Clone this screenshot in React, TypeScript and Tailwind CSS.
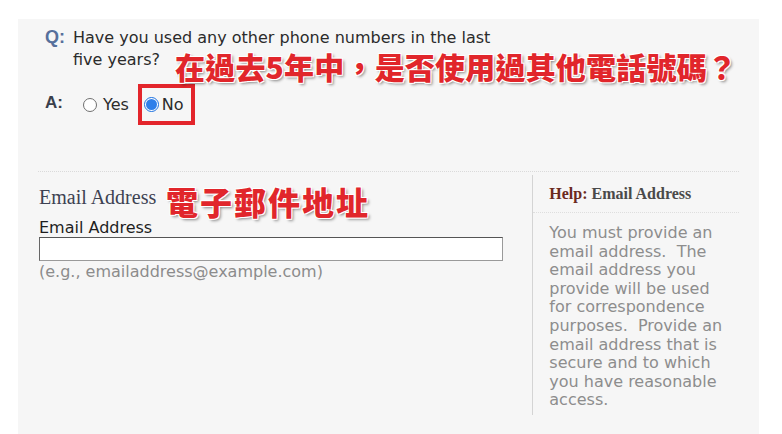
import React from 'react';

const helpLines = [
  'You must provide an',
  'email address.  The',
  'email address you',
  'provide will be used',
  'for correspondence',
  'purposes.  Provide an',
  'email address that is',
  'secure and to which',
  'you have reasonable',
  'access.',
];

const noteStyle =
  "font-['Noto_Sans_CJK_TC',sans-serif] font-black text-[#e1262b] whitespace-nowrap [text-shadow:-1px_-1px_0_#fff,1px_-1px_0_#fff,-1px_1px_0_#fff,1px_1px_0_#fff,2px_2px_3px_rgba(0,0,0,0.45)]";

function Radio({ checked }: { checked?: boolean }) {
  return checked ? (
    <span className="w-[15px] h-[15px] rounded-full border border-[#1a6fe0] bg-white flex items-center justify-center">
      <span className="w-[11px] h-[11px] rounded-full bg-[#2f7fea]" />
    </span>
  ) : (
    <span className="w-[14px] h-[14px] rounded-full border border-[#6f6f6f] bg-white" />
  );
}

export default function App() {
  return (
    <div className="w-[782px] h-[434px] bg-white pt-[19px] pl-[18px] overflow-hidden font-['DejaVu_Sans',sans-serif]">
      <div className="relative w-[741px] h-[415px] bg-[#f6f6f6] px-[20px]">
        {/* Question */}
        <div className="h-[152px] pt-[5px] pl-[7px]">
          <div className="flex items-baseline">
            <span className="w-[28px] text-[18px] font-bold text-[#56709c] font-['Liberation_Sans',sans-serif]">Q:</span>
            <p className="text-[16px] leading-[22px] text-[#2b2b2b]">
              Have you used any other phone numbers in the last
              <br />
              five years?
            </p>
          </div>
          <div className="flex items-center mt-[13px]">
            <span className="w-[38px] text-[17px] font-bold text-[#3a3f4c] font-['Liberation_Sans',sans-serif] -mt-[4px]">A:</span>
            <label className="flex items-center gap-[6px] text-[16px] text-[#2b2b2b]">
              <Radio />
              Yes
            </label>
            <div className="ml-[9px] h-[41px] border-4 border-[#e3252b] flex items-center gap-[3px] pl-[2px] pr-[7px]">
              <Radio checked />
              <span className="text-[16px] text-[#2b2b2b]">No</span>
            </div>
          </div>
        </div>

        {/* Email section */}
        <div className="border-t border-dotted border-[#dadada]">
          <div className="flex pt-[3px]">
            <div className="w-[495px] pl-[1px] pt-[11px]">
              <h3 className="text-[20px] leading-[22px] text-[#3d4252] font-['Liberation_Serif',serif]">Email Address</h3>
              <label className="block mt-[10px] text-[16px] leading-[19px] text-[#1e1e1e]">Email Address</label>
              <input
                type="text"
                className="block w-[464px] h-[24px] bg-white border border-[#9a9a9a] border-t-[#555] border-l-[#666] outline-none"
              />
              <p className="mt-[1px] text-[16px] leading-[19px] text-[#8c8c8c]">(e.g., emailaddress@example.com)</p>
            </div>
            <div className="w-[207px] border-l border-[#d4d4d4] pb-[5px]">
              <div className="pl-[16px] pt-[10px] pb-[9px] border-b border-dotted border-[#dedede] font-['Liberation_Serif',serif] font-bold text-[16px] leading-[18px]">
                <span className="text-[#6b2a1e]">Help:</span>{' '}
                <span className="text-[#4a4a4a]">Email Address</span>
              </div>
              <div className="pl-[16px] pt-[11px] text-[16px] leading-[18.6px] text-[#8d8d8d] whitespace-pre">
                {helpLines.map((line) => (
                  <div key={line}>{line}</div>
                ))}
              </div>
            </div>
          </div>
        </div>

        {/* Annotations */}
        <div className={`absolute left-[157px] top-[32px] text-[30px] leading-[30px] tracking-[0.2px] ${noteStyle}`}>
          在過去5年中，是否使用過其他電話號碼？
        </div>
        <div className={`absolute left-[148px] top-[166px] text-[32px] leading-[32px] tracking-[2px] ${noteStyle}`}>
          電子郵件地址
        </div>
      </div>
    </div>
  );
}
